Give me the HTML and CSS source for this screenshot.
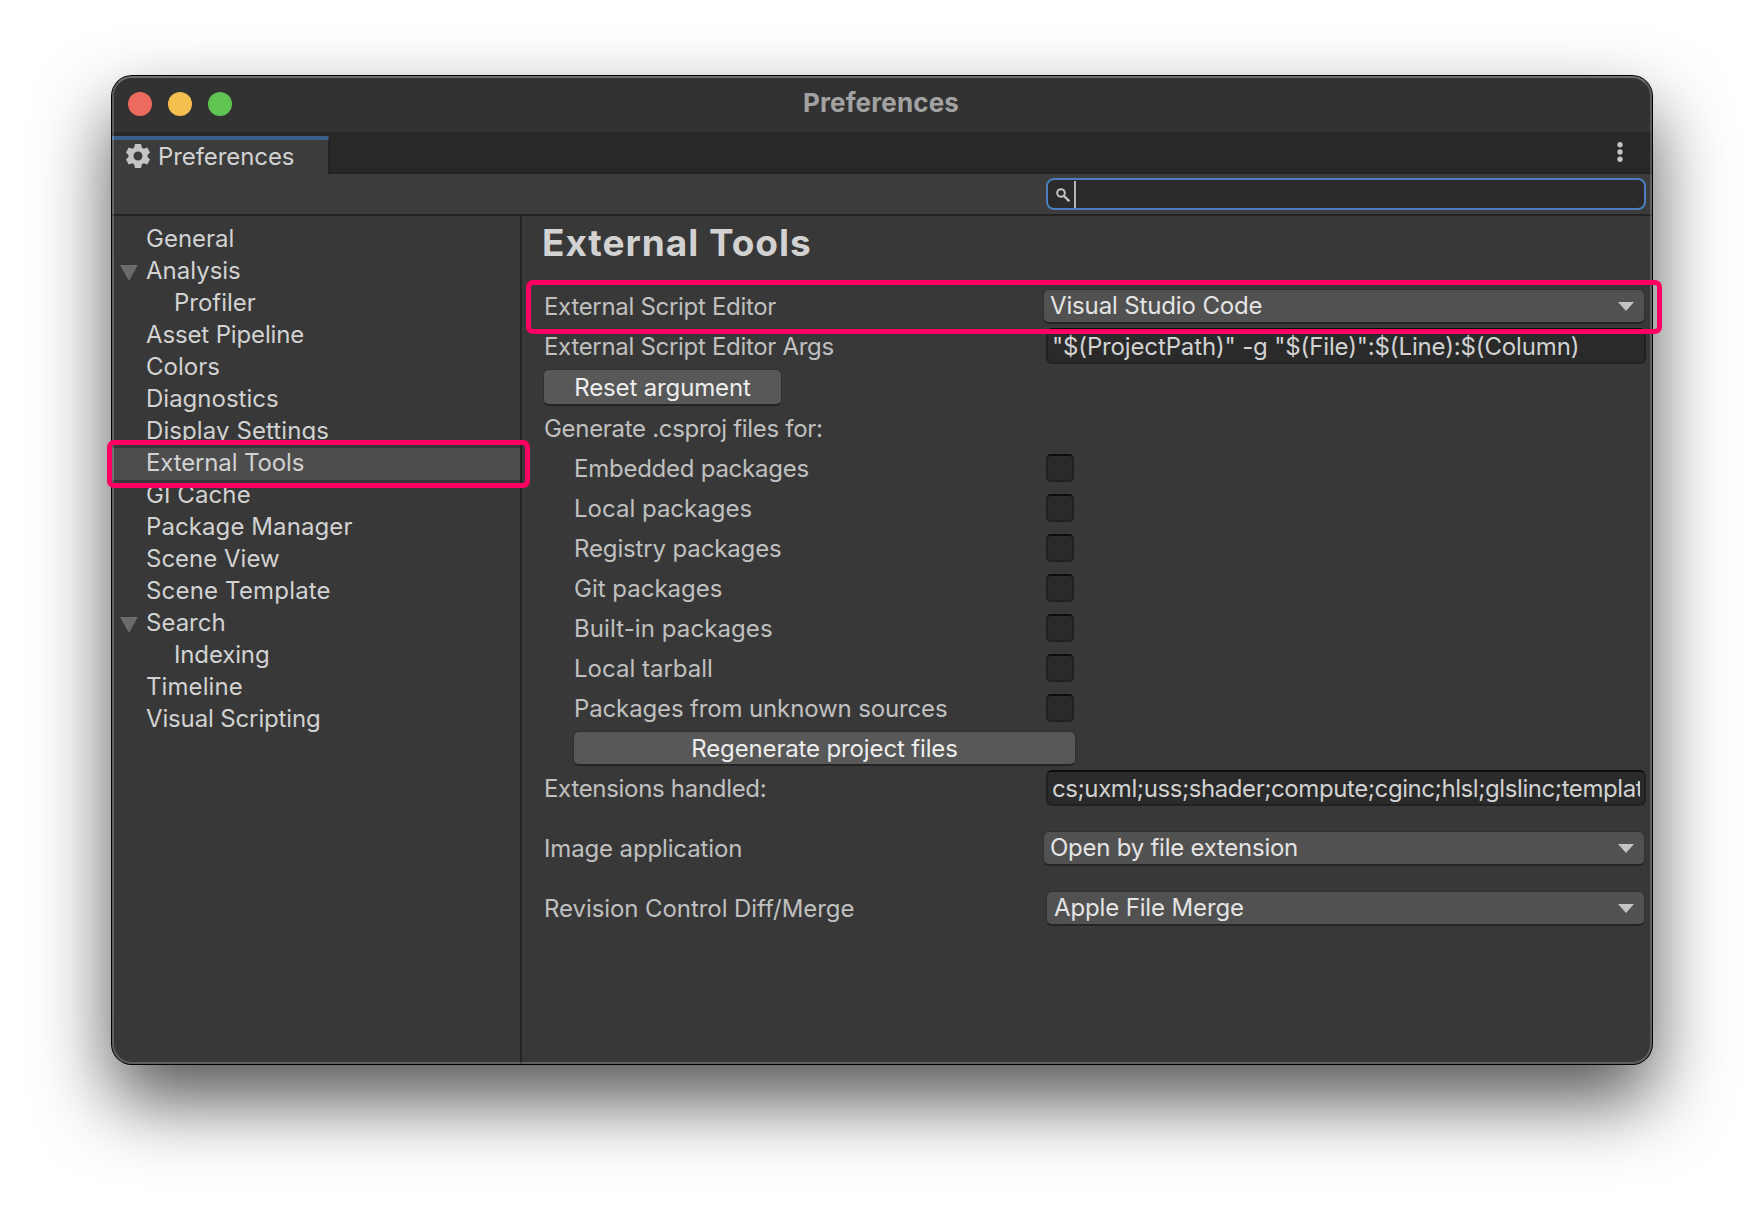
FILE: index.html
```html
<!DOCTYPE html>
<html lang="en">
<head>
<meta charset="utf-8">
<title>Preferences</title>
<link rel="stylesheet" href="styles.css">
</head>
<body>
<main class="window">
  <header class="titlebar">
    <div class="lights"><i class="light light-close"></i><i class="light light-min"></i><i class="light light-max"></i></div>
    <h1 class="title">Preferences</h1>
  </header>
  <div class="tabbar">
    <div class="tab">
      <svg class="gear" viewBox="0 0 24 24"><path fill="#c4c4c4" fill-rule="evenodd" d="M9 0h6l.8 3.600 1.900 1.100L21.200 3.600l2.800 5-2.500 2.400v2l2.500 2.400-2.800 5-3.500-1.100-1.900 1.100L15 24H9l-.8-3.600-1.900-1.100-3.500 1.100-2.800-5L2.500 13v-2L0 8.600l2.800-5 3.500 1.100 1.900-1.100zM12 7.500a4.500 4.500 0 1 0 0 9 4.500 4.500 0 0 0 0-9z"/></svg>
      <span class="tab-name">Preferences</span>
    </div>
    <svg class="kebab" viewBox="0 0 6 20"><g fill="#c4c4c4"><circle cx="3" cy="2.700" r="2.700"/><circle cx="3" cy="10" r="2.700"/><circle cx="3" cy="17.300" r="2.700"/></g></svg>
  </div>
  <div class="toolbar">
    <div class="search">
      <svg class="lens" viewBox="0 0 14 14"><circle cx="5" cy="5" r="3.800" fill="none" stroke="#c4c4c4" stroke-width="2"/><path d="M8 8l5.300 5.300" stroke="#c4c4c4" stroke-width="2.400"/></svg>
      <span class="caret"></span>
    </div>
  </div>
  <div class="panes">
    <nav class="sidebar">
      <div class="item">General</div>
      <div class="item"><svg class="fold" viewBox="0 0 18 16"><path fill="#6b6b6b" d="M0 0h18L9 16z"/></svg>Analysis</div>
      <div class="item child">Profiler</div>
      <div class="item snug">Asset Pipeline</div>
      <div class="item">Colors</div>
      <div class="item">Diagnostics</div>
      <div class="item loose">Display Settings</div>
      <div class="item snug selected">External Tools</div>
      <div class="item loose">GI Cache</div>
      <div class="item loose">Package Manager</div>
      <div class="item">Scene View</div>
      <div class="item looser">Scene Template</div>
      <div class="item"><svg class="fold" viewBox="0 0 18 16"><path fill="#6b6b6b" d="M0 0h18L9 16z"/></svg>Search</div>
      <div class="item snug child">Indexing</div>
      <div class="item loose">Timeline</div>
      <div class="item snug">Visual Scripting</div>
      <div class="mark mark-nav"></div>
    </nav>
    <section class="content">
      <h2 class="heading">External Tools</h2>
      <div class="row"><span class="label tightest">External Script Editor</span><div class="select wide"><span class="snug">Visual Studio Code</span><svg class="arrow" viewBox="0 0 16 9"><path fill="#c4c4c4" d="M0 0h16L8 9z"/></svg></div></div>
      <div class="row"><span class="label tightest">External Script Editor Args</span><div class="input"><span class="clip snug">"$(ProjectPath)" -g "$(File)":$(Line):$(Column)</span></div></div>
      <div class="row row-button"><div class="button snug reset">Reset argument</div></div>
      <div class="row"><span class="label tightest">Generate .csproj files for:</span></div>
      <div class="row sub"><span class="label tight">Embedded packages</span><i class="check"></i></div>
      <div class="row sub"><span class="label">Local packages</span><i class="check"></i></div>
      <div class="row sub"><span class="label snug">Registry packages</span><i class="check"></i></div>
      <div class="row sub"><span class="label">Git packages</span><i class="check"></i></div>
      <div class="row sub"><span class="label loose">Built-in packages</span><i class="check"></i></div>
      <div class="row sub"><span class="label">Local tarball</span><i class="check"></i></div>
      <div class="row sub"><span class="label snug">Packages from unknown sources</span><i class="check"></i></div>
      <div class="row"><div class="button snug regen">Regenerate project files</div></div>
      <div class="row"><span class="label tightest">Extensions handled:</span><div class="input"><span class="clip exts">cs;uxml;uss;shader;compute;cginc;hlsl;glslinc;template</span></div></div>
      <div class="row spaced"><span class="label snug">Image application</span><div class="select wide"><span class="tight">Open by file extension</span><svg class="arrow" viewBox="0 0 16 9"><path fill="#c4c4c4" d="M0 0h16L8 9z"/></svg></div></div>
      <div class="row spaced"><span class="label near">Revision Control Diff/Merge</span><div class="select"><span class="snug">Apple File Merge</span><svg class="arrow" viewBox="0 0 16 9"><path fill="#c4c4c4" d="M0 0h16L8 9z"/></svg></div></div>
      <div class="mark mark-editor"></div>
    </section>
  </div>
</main>
</body>
</html>
```
FILE: styles.css
```css
* { box-sizing: border-box; }
body {
  margin: 0;
  height: 1212px;
  padding: 76px 112px;
  background: #fff;
  font-family: Inter, "Liberation Sans", sans-serif;
  font-size: 24px;
  line-height: 29px;
  color: #d2d2d2;
  overflow: hidden;
}
.window {
  position: relative;
  display: flex;
  flex-direction: column;
  width: 1540px;
  height: 988px;
  border-radius: 20px;
  background: #383838;
  box-shadow: 0 0 0 1px #000, 0 36px 76px rgba(0,0,0,.68);
}
/* light rim drawn over the window's edge */
.window::after {
  content: "";
  position: absolute;
  inset: 0;
  border-radius: 20px;
  border: 2px solid rgba(255,255,255,.2);
  border-top-color: rgba(255,255,255,.3);
  pointer-events: none;
}
.titlebar {
  display: grid;
  grid-template-columns: 1fr auto 1fr;
  align-items: center;
  height: 56px;
  padding-left: 16px;
  border-radius: 20px 20px 0 0;
  background: #323232;
}
.lights { display: flex; gap: 16px; }
.light { width: 24px; height: 24px; border-radius: 50%; }
.light-close { background: #ed6a5e; }
.light-min { background: #f5bf4f; }
.light-max { background: #61c554; }
.title { margin: 0 18px 2px 0; font-size: 26px; line-height: 32px; font-weight: 700; letter-spacing: .15px; color: #a2a2a2; }
.tabbar {
  display: flex;
  justify-content: space-between;
  height: 42px;
  padding-top: 4px;
  background: #282828;
  border-bottom: 2px solid #232323;
}
.tab {
  display: flex;
  width: 218px;
  height: 38px;
  padding-left: 14px;
  border-top: 4px solid #3a5f8c;
  border-right: 2px solid #232323;
  border-top-right-radius: 4px;
  background: #3c3c3c;
}
.gear { width: 24px; height: 24px; margin-top: 4px; }
.tab-name { margin: 2px 0 0 8px; letter-spacing: -.08px; }
.kebab { width: 6px; height: 20px; margin: 6px 29px 0 0; }
.toolbar {
  display: flex;
  justify-content: flex-end;
  height: 42px;
  padding: 4px 6px 0 0;
  background: #3c3c3c;
  border-bottom: 2px solid #232323;
}
.search {
  display: flex;
  width: 600px;
  height: 32px;
  padding-left: 8px;
  border: 2px solid #4a7ebf;
  border-radius: 8px;
  background: #2a2a2a;
}
.lens { width: 14px; height: 14px; margin-top: 8px; }
.caret { width: 2px; height: 27px; margin: 1px 0 0 4px; background: #b4b4b4; }
.panes { flex: 1; display: flex; }
.sidebar { position: relative; width: 410px; padding-top: 8px; border-right: 2px solid #232323; }
.item { position: relative; height: 32px; padding-left: 34px; white-space: nowrap; }
.child { padding-left: 62px; }
.selected { background: #4d4d4d; }
.fold { position: absolute; left: 8px; top: 9px; width: 18px; height: 16px; }
.content { position: relative; flex: 1; padding: 0 6px 0 22px; }
.heading {
  margin: 0 0 0 -2px;
  height: 72px;
  padding-top: 4px;
  font-size: 37px;
  line-height: 45px;
  font-weight: 650;
  letter-spacing: .95px;
  white-space: nowrap;
}
.row { display: flex; height: 40px; }
.row-button { height: 42px; }
.spaced { margin-top: 20px; }
.label { flex: 1; padding-top: 4px; color: #c0c0c0; white-space: nowrap; }
.sub { padding-left: 30px; }

/* tracking steps */
.looser { letter-spacing: .18px; }
.loose { letter-spacing: .09px; }
.near { letter-spacing: -.07px; }
.snug { letter-spacing: -.14px; }
.tight { letter-spacing: -.25px; }
.tightest { letter-spacing: -.31px; }
.exts { letter-spacing: -.42px; }

.input {
  width: 600px;
  height: 36px;
  padding: 2px 4px 0;
  border: 2px solid #212121;
  border-top-color: #0d0d0d;
  border-radius: 6px;
  background: #2a2a2a;
}
.clip { display: block; overflow: hidden; white-space: nowrap; }
.select {
  display: flex;
  justify-content: space-between;
  width: 599px;
  height: 35px;
  margin: 1px 1px 0 0;
  padding: 1px 10px 0 7px;
  border: 1px solid #303030;
  border-bottom: 2px solid #242424;
  border-radius: 6px;
  background: #515151;
  color: #e4e4e4;
}
.wide { width: 602px; padding-left: 6px; }
.arrow { width: 16px; height: 9px; margin-top: 11px; }
.button {
  border: 1px solid #303030;
  border-bottom: 2px solid #242424;
  border-radius: 6px;
  background: #585858;
  color: #eee;
  text-align: center;
  white-space: nowrap;
}
.reset { width: 239px; height: 37px; margin: 1px 0 0 -1px; padding-top: 3px; }
.regen { width: 503px; height: 35px; margin: 1px 0 0 29px; padding-top: 2px; }
.check {
  width: 28px;
  height: 28px;
  margin: 4px 572px 0 0;
  border: 2px solid #212121;
  border-top-color: #0d0d0d;
  border-radius: 5px;
  background: #2a2a2a;
}
/* highlight frames laid over the window */
.mark { position: absolute; z-index: 2; border: 5px solid #ff0062; border-radius: 7px; }
.mark-nav { left: -5px; top: 224px; width: 423px; height: 48px; }
.mark-editor { left: 4px; top: 64px; width: 1136px; height: 54px; }
```
